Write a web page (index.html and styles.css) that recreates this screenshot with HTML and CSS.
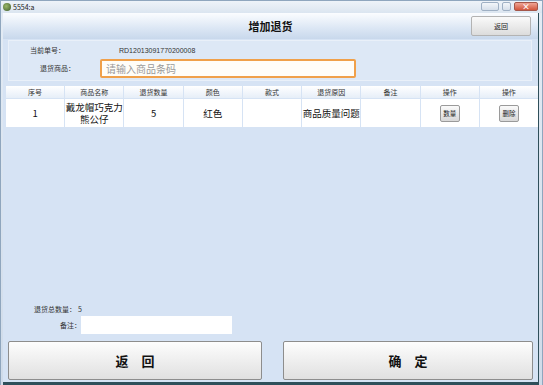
FILE: index.html
```html
<!DOCTYPE html>
<html lang="zh-CN">
<head>
    <meta charset="UTF-8">
    <title>5554:a</title>
    <link rel="stylesheet" href="styles.css">
</head>
<body>
    <div class="window">
        <div class="titlebar">
            <span class="app-icon"></span>
            <span class="caption">5554:a</span>
            <div class="win-btns">
                <span class="wb wb-min"></span>
                <span class="wb wb-max"></span>
                <span class="wb wb-close">×</span>
            </div>
        </div>

        <div class="screen">
            <div class="header">
                <h1>增加退货</h1>
                <button class="back-btn">返回</button>
            </div>

            <div class="form-panel">
                <div class="form-row">
                    <label class="lbl-order">当前单号：</label>
                    <span class="order-no">RD12013091770200008</span>
                </div>
                <div class="form-row">
                    <label class="lbl-goods">退货商品：</label>
                    <input type="text" class="barcode" placeholder="请输入商品条码">
                </div>
            </div>

            <table class="grid">
                <thead>
                    <tr>
                        <th>序号</th>
                        <th>商品名称</th>
                        <th>退货数量</th>
                        <th>颜色</th>
                        <th>款式</th>
                        <th>退货原因</th>
                        <th>备注</th>
                        <th>操作</th>
                        <th>操作</th>
                    </tr>
                </thead>
                <tbody>
                    <tr>
                        <td>1</td>
                        <td>戴龙帽巧克力熊公仔</td>
                        <td>5</td>
                        <td>红色</td>
                        <td></td>
                        <td>商品质量问题</td>
                        <td></td>
                        <td><button class="mini-btn">数量</button></td>
                        <td><button class="mini-btn">删除</button></td>
                    </tr>
                </tbody>
            </table>

            <div class="spacer"></div>

            <div class="summary">
                <div class="sum-row">
                    <label>退货总数量：</label>
                    <span>5</span>
                </div>
                <div class="sum-row">
                    <label>备注：</label>
                    <input type="text" class="remark">
                </div>
            </div>

            <div class="actions">
                <button class="big-btn">返　回</button>
                <button class="big-btn">确　定</button>
            </div>
        </div>
    </div>
</body>
</html>
```

FILE: styles.css
```css
* {
    margin: 0;
    padding: 0;
    box-sizing: border-box;
}

body {
    font-family: "Noto Sans CJK SC", "Liberation Sans", sans-serif;
    background: #fff;
    width: 543px;
    height: 385px;
    overflow: hidden;
}

.window {
    width: 543px;
    height: 385px;
    display: flex;
    flex-direction: column;
    background: linear-gradient(#e4ecf5, #cfdbe9);
    border: 1px solid #8fa6be;
    border-bottom: none;
}

.titlebar {
    height: 12px;
    display: flex;
    align-items: center;
    padding-left: 2px;
    background: linear-gradient(#eef3f9, #dbe5f0);
}

.app-icon {
    width: 8px;
    height: 8px;
    border-radius: 50%;
    background: radial-gradient(circle at 40% 40%, #9bb86a, #3d5a2a);
    margin-right: 2px;
}

.caption {
    font-size: 7px;
    color: #222;
    line-height: 1;
}

.win-btns {
    margin-left: auto;
    display: flex;
    align-self: flex-start;
    gap: 3px;
    margin-top: 1px;
    margin-right: 4px;
}

.wb {
    height: 9px;
    border: 1px solid #9fb0c4;
    border-radius: 2px;
    background: linear-gradient(#f3f6fa, #d6dfea);
}

.wb-min {
    width: 18px;
}

.wb-max {
    width: 9px;
}

.wb-close {
    width: 24px;
    background: linear-gradient(#f0a595, #d2563c);
    border-color: #a4574a;
    color: #fff;
    font-size: 8px;
    line-height: 7px;
    text-align: center;
    font-weight: bold;
}

.screen {
    flex: 1;
    margin: 0 3px 0 2px;
    background: #d6e3f4;
    border-right: 1px solid #2f4f5a;
    border-bottom: 3px solid #2f4f5a;
    display: flex;
    flex-direction: column;
}

.header {
    height: 26px;
    display: flex;
    align-items: center;
    justify-content: center;
    position: relative;
    background: linear-gradient(#fbfdff, #dbe6f4 60%, #c8d8ec);
}

.header h1 {
    font-size: 11px;
    font-weight: bold;
    color: #111;
}

.back-btn {
    position: absolute;
    right: 7px;
    top: 3px;
    width: 60px;
    height: 20px;
    font-family: inherit;
    font-size: 7px;
    color: #222;
    border: 1px solid #b3b3b3;
    border-radius: 2px;
    background: linear-gradient(#fafafa, #dcdcdc);
}

.form-panel {
    margin: 1px 6px 0 5px;
    padding: 0 0 3px 0;
    background: #dde8f6;
    border: 1px solid #e9f0f9;
}

.form-row {
    display: flex;
    align-items: center;
    height: 18px;
}

.form-row label {
    text-align: right;
    font-size: 7px;
    color: #333;
}

.lbl-order {
    width: 56px;
}

.lbl-goods {
    width: 66px;
}

.order-no {
    margin-left: 54px;
    font-size: 7px;
    color: #333;
    font-family: "Liberation Sans", sans-serif;
}

.barcode {
    margin-left: 25px;
    width: 256px;
    height: 19px;
    border: 2px solid #f0a04a;
    border-radius: 2px;
    background: #fffdf8;
    padding-left: 4px;
    font-family: inherit;
    font-size: 10px;
    color: #333;
}

.barcode::placeholder {
    color: #9a9a9a;
}

.grid {
    margin: 5px 2px 0 2px;
    width: 534px;
    border-collapse: separate;
    border-spacing: 1px 0;
    table-layout: fixed;
}

.grid th {
    height: 12px;
    font-size: 7px;
    font-weight: normal;
    color: #333;
    background: linear-gradient(#ffffff, #e6eef8);
}

.grid td {
    height: 29px;
    background: #fff;
    text-align: center;
    font-size: 9.5px;
    color: #111;
    line-height: 12px;
    border-top: 1px solid #d6e3f4;
}

.mini-btn {
    width: 20px;
    height: 17px;
    font-family: inherit;
    font-size: 6.5px;
    color: #222;
    border: 1px solid #9a9a9a;
    border-radius: 2px;
    background: linear-gradient(#fafafa, #d8d8d8);
}

.spacer {
    flex: 1;
}

.summary {
    padding-left: 11px;
    font-size: 7px;
    color: #333;
}

.sum-row {
    display: flex;
    align-items: center;
}

.sum-row:first-child {
    height: 14px;
    padding-left: 20px;
}

.sum-row:first-child span {
    margin-left: 2px;
}

.sum-row:last-child label {
    width: 67px;
    text-align: right;
}

.remark {
    width: 151px;
    height: 18px;
    border: none;
    background: #fff;
}

.actions {
    display: flex;
    justify-content: space-between;
    padding: 7px 5px 2px 5px;
}

.big-btn {
    width: 254px;
    height: 39px;
    font-family: inherit;
    font-size: 13px;
    font-weight: bold;
    color: #111;
    border: 1px solid #8d8d8d;
    border-radius: 2px;
    background: linear-gradient(#fdfdfd, #e0e0e0);
}

.big-btn + .big-btn {
    width: 250px;
}
```
